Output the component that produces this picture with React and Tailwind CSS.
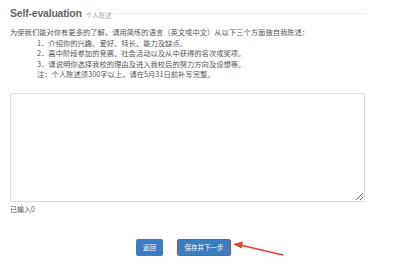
import React from "react";

function App() {
  const cn = { fontFamily: '"Noto Sans CJK SC", "Liberation Sans", sans-serif' };
  return (
    <div className="relative w-[408px] h-[264px] bg-white overflow-hidden" style={cn}>
      <div className="pl-[10px] w-[365px] pt-[7px]">
        <div className="flex items-end h-[11px]">
          <span className="text-[10.5px] font-bold text-[#666] leading-none tracking-[-0.2px]" style={{ fontFamily: '"Liberation Sans", sans-serif' }}>
            Self-evaluation
          </span>
          <span className="text-[6.5px] text-[#aaa] ml-[4px] leading-none">个人陈述</span>
          <div className="flex-1 h-[1px] bg-[#eee] ml-[3px] mb-[4px]"></div>
        </div>

        <div className="mt-[9px] text-[7.3px] text-[#555] leading-[10.6px]">
          <p>为使我们能对你有更多的了解，请用简练的语言（英文或中文）从以下三个方面做自我陈述：</p>
          <div className="pl-[27px]">
            <p>1．介绍你的兴趣、爱好、特长、能力及缺点。</p>
            <p>2．高中阶段参加的竞赛、社会活动以及从中获得的名次或奖项。</p>
            <p>3．请说明你选择我校的理由及进入我校后的努力方向及设想等。</p>
            <p>注：个人陈述须300字以上，请在5月31日前补写完整。</p>
          </div>
        </div>

        <textarea className="block mt-[13px] w-[355px] h-[109px] border border-[#ddd] rounded-[2px] resize-y outline-none"></textarea>
        <p className="mt-[2px] text-[7px] text-[#555] leading-[10px]">已输入0</p>

        <div className="flex justify-center gap-[14px] mt-[25px] pr-[8px]">
          <button className="w-[27px] h-[17px] bg-[#3a7cbf] text-white text-[6.5px] rounded-[2px]">返回</button>
          <button className="w-[54px] h-[17px] bg-[#3a7cbf] text-white text-[6.5px] rounded-[2px] border-[1.5px] border-[#c2414b]">保存并下一步</button>
        </div>
      </div>

      <svg className="absolute left-[231px] top-[239px]" width="56" height="20" viewBox="0 0 56 20">
        <line x1="52" y1="16" x2="9" y2="6" stroke="#e8412f" strokeWidth="1.5" />
        <polygon points="2,5 12,2.5 10.5,9.5" fill="#e8412f" />
      </svg>
    </div>
  );
}

export default App;
